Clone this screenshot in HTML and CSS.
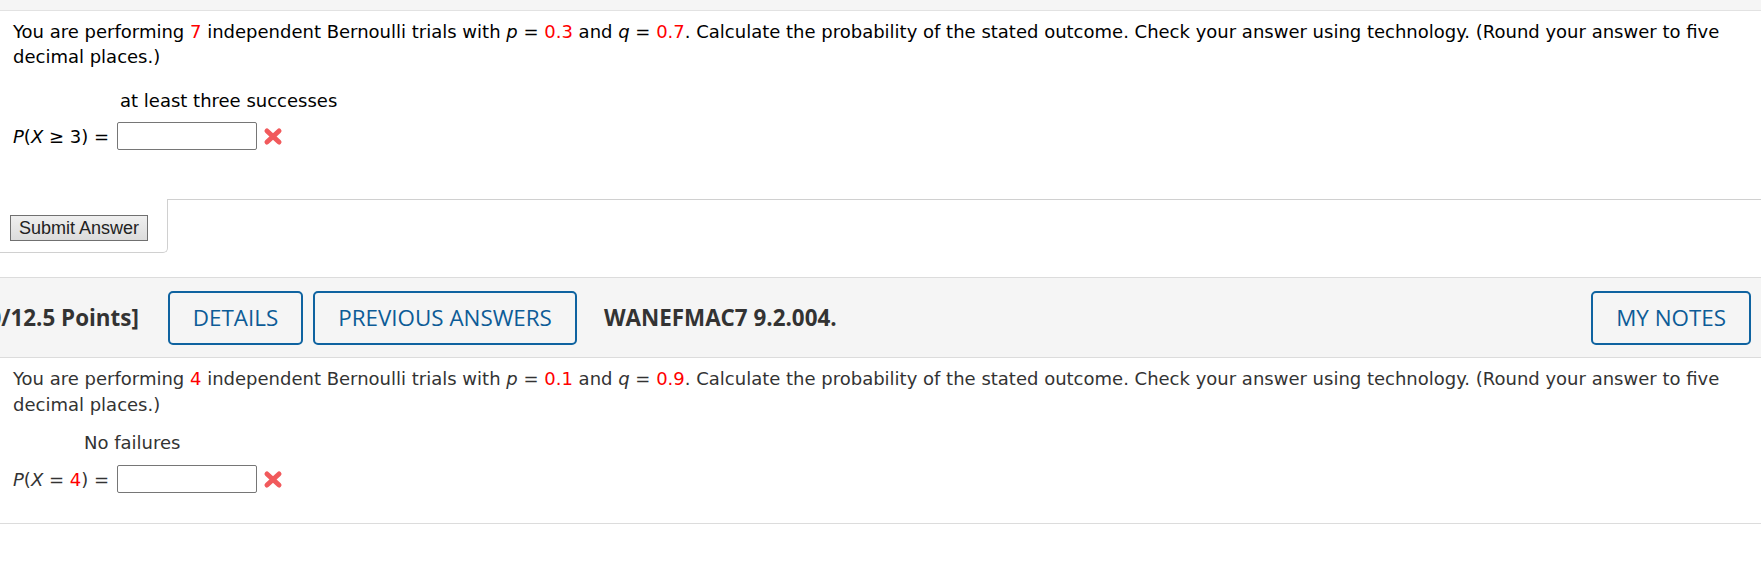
FILE: index.html
```html
<!DOCTYPE html>
<html lang="en">
<head>
  <meta charset="UTF-8">
  <title>WebAssign</title>
  <link rel="stylesheet" href="styles.css">
</head>
<body>
  <div class="top-band"></div>

  <!-- current question -->
  <div class="question current">
    <p class="stem">You are performing <span class="red">7</span> independent Bernoulli trials with <i>p</i> = <span class="red">0.3</span> and <i>q</i> = <span class="red">0.7</span>. Calculate the probability of the stated outcome. Check your answer using technology. (Round your answer to five decimal places.)</p>
    <p class="prompt prompt-wide">at least three successes</p>
    <div class="answer-row">
      <span class="lhs"><i>P</i>(<i>X</i> &ge; 3) =</span>
      <input type="text" class="answer-box">
      <svg class="wrong" width="20" height="19" viewBox="0 0 20 19">
        <line x1="4" y1="4" x2="16" y2="15" />
        <line x1="16" y1="4" x2="4" y2="15" />
      </svg>
    </div>
  </div>

  <div class="submit-area">
    <div class="submit-box">
      <button class="submit-btn">Submit Answer</button>
    </div>
    <div class="submit-rest"></div>
  </div>

  <!-- next question header -->
  <div class="q-header">
    <span class="points">[0/12.5 Points]</span>
    <button class="q-btn">DETAILS</button>
    <button class="q-btn q-prev">PREVIOUS ANSWERS</button>
    <span class="q-code">WANEFMAC7 9.2.004.</span>
    <button class="q-btn q-notes">MY NOTES</button>
  </div>

  <div class="question next">
    <p class="stem">You are performing <span class="red">4</span> independent Bernoulli trials with <i>p</i> = <span class="red">0.1</span> and <i>q</i> = <span class="red">0.9</span>. Calculate the probability of the stated outcome. Check your answer using technology. (Round your answer to five decimal places.)</p>
    <p class="prompt prompt-narrow">No failures</p>
    <div class="answer-row">
      <span class="lhs"><i>P</i>(<i>X</i> = <span class="red">4</span>) =</span>
      <input type="text" class="answer-box">
      <svg class="wrong" width="20" height="19" viewBox="0 0 20 19">
        <line x1="4" y1="4" x2="16" y2="15" />
        <line x1="16" y1="4" x2="4" y2="15" />
      </svg>
    </div>
  </div>
</body>
</html>
```

FILE: styles.css
```css
body {
  margin: 0;
  background: #fff;
  font-family: "DejaVu Sans", Verdana, sans-serif;
  font-size: 18px;
  overflow: hidden;
}

p {
  margin: 0;
}

.top-band {
  height: 10px;
  background: #f5f5f5;
  border-bottom: 1px solid #e2e2e2;
}

.question {
  padding: 8px 13px 0 13px;
}

.current {
  color: #000;
}

.next {
  color: #333;
  padding-bottom: 30px;
  border-bottom: 1px solid #dcdcdc;
}

.stem {
  line-height: 25px;
}

.next .stem {
  line-height: 26px;
}

.red {
  color: #f00;
}

.prompt {
  line-height: 25px;
}

.prompt-wide {
  margin-top: 19px;
  padding-left: 107px;
}

.prompt-narrow {
  margin-top: 12px;
  padding-left: 71px;
}

.answer-row {
  display: flex;
  align-items: center;
  margin-top: 9px;
  height: 28px;
}

.next .answer-row {
  margin-top: 10px;
}

.lhs {
  margin-right: 8px;
}

.answer-box {
  box-sizing: border-box;
  width: 140px;
  height: 28px;
  border: 1px solid #767676;
  border-radius: 2px;
  background: #fff;
  margin: 0;
}

.wrong {
  margin-left: 6px;
}

.wrong line {
  stroke: #f15a5c;
  stroke-width: 5;
  stroke-linecap: round;
}

/* submit strip */
.submit-area {
  display: flex;
  margin-top: 49px;
}

.submit-box {
  box-sizing: border-box;
  width: 168px;
  height: 54px;
  padding: 16px 0 0 10px;
  border-right: 1px solid #d0d0d0;
  border-bottom: 1px solid #d0d0d0;
  border-bottom-right-radius: 5px;
}

.submit-rest {
  flex: 1;
  border-top: 1px solid #d0d0d0;
}

.submit-btn {
  width: 138px;
  height: 26px;
  padding: 0;
  font-family: "Liberation Sans", Arial, sans-serif;
  font-size: 18px;
  color: #222;
  background: linear-gradient(#efefef, #dcdcdc);
  border: 1px solid #707070;
  border-radius: 0;
}

/* question header */
.q-header {
  box-sizing: border-box;
  display: flex;
  align-items: center;
  height: 81px;
  margin-top: 24px;
  padding-right: 10px;
  background: #f5f5f5;
  border-top: 1px solid #dcdcdc;
  border-bottom: 1px solid #dcdcdc;
  font-family: "Open Sans", sans-serif;
  font-size: 22.4px;
}

.points {
  margin-left: -19px;
  margin-right: 29px;
  font-weight: bold;
  color: #333;
  white-space: nowrap;
}

.q-btn {
  box-sizing: border-box;
  height: 54px;
  padding: 0 23px;
  font-family: "Open Sans", sans-serif;
  font-size: 22.4px;
  font-weight: 500;
  color: #0d5c97;
  background: transparent;
  border: 2px solid #0f63a0;
  border-radius: 5px;
}

.q-prev {
  margin-left: 10px;
}

.q-code {
  margin-left: 27px;
  font-weight: bold;
  color: #333;
}

.q-notes {
  margin-left: auto;
}
```
